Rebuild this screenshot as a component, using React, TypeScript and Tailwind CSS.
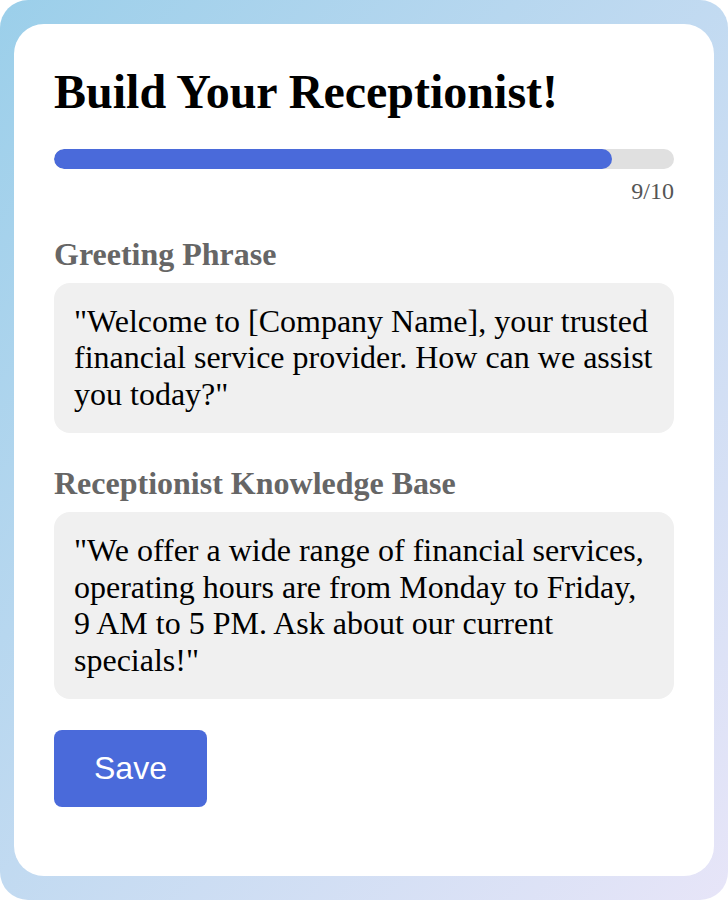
import { useState } from 'react';

const greeting =
  '"Welcome to [Company Name], your trusted financial service provider. How can we assist you today?"';
const knowledge =
  '"We offer a wide range of financial services, operating hours are from Monday to Friday, 9 AM to 5 PM. Ask about our current specials!"';

function Field({ label, value }: { label: string; value: string }) {
  return (
    <div>
      <div className="text-[32px] font-bold leading-[1.15] text-[#666666]">{label}</div>
      <div className="mt-[10px] rounded-2xl bg-[#f0f0f0] px-5 py-5 text-[32px] leading-[1.15] text-black">
        {value}
      </div>
    </div>
  );
}

export default function App() {
  const [step] = useState(9);
  const total = 10;

  return (
    <div className="h-[900px] w-full rounded-[28px] bg-gradient-to-br from-[#9bcfea] to-[#e7e5f8] px-[14px] py-6">
      <div className="h-full rounded-[30px] bg-white p-10 font-['Liberation_Serif',serif]">
        <h1 className="text-[48px] font-bold leading-[1.15] text-black">Build Your Receptionist!</h1>

        {/* Progress */}
        <div className="mt-[30px] h-5 w-full overflow-hidden rounded-full bg-[#e0e0e0]">
          <div className="h-full rounded-full bg-[#4a6ada]" style={{ width: `${(step / total) * 100}%` }} />
        </div>
        <div className="mt-[9px] text-right text-[24px] leading-[1.15] text-[#555555]">
          {step}/{total}
        </div>

        <div className="mt-[30px] flex flex-col gap-8">
          <Field label="Greeting Phrase" value={greeting} />
          <Field label="Receptionist Knowledge Base" value={knowledge} />
        </div>

        <button className="mt-[31px] rounded-lg bg-[#4a6ada] px-10 py-5 font-['Liberation_Sans',sans-serif] text-[32px] leading-[1.15] text-white">
          Save
        </button>
      </div>
    </div>
  );
}
